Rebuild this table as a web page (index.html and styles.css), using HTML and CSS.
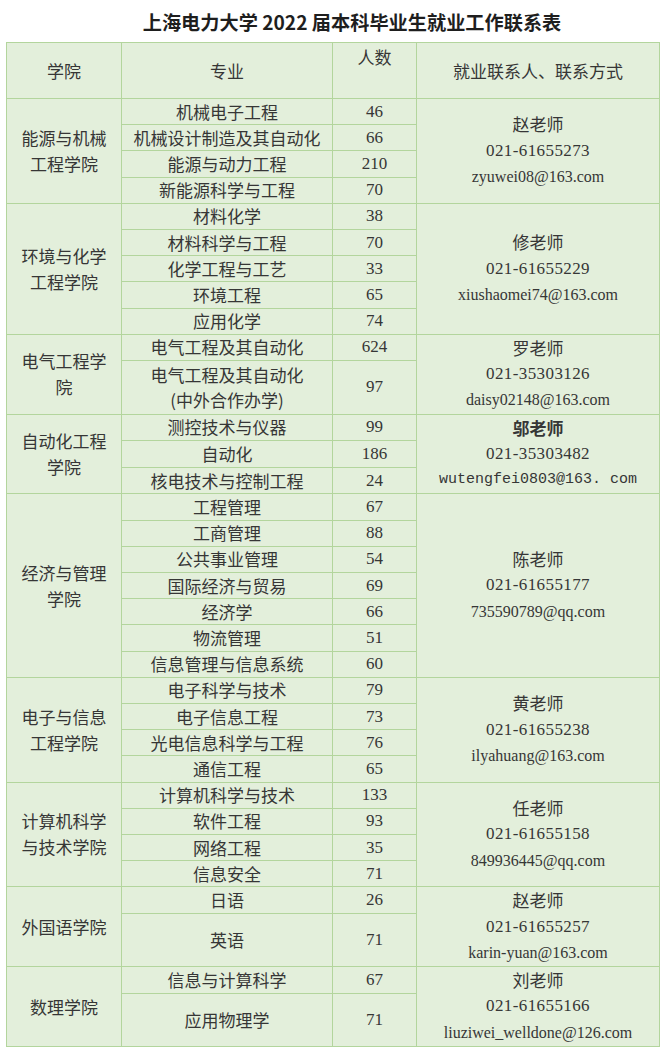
FILE: index.html
```html
<!DOCTYPE html>
<html lang="zh-CN">
<head>
<meta charset="utf-8">
<title>上海电力大学2022届本科毕业生就业工作联系表</title>
<link rel="stylesheet" href="styles.css">
</head>
<body>
<div class="page">
  <h1 class="title">上海电力大学 2022 届本科毕业生就业工作联系表</h1>
  <table class="sheet">
    <colgroup>
      <col class="c-school"><col class="c-major"><col class="c-num"><col class="c-contact">
    </colgroup>
    <thead>
      <tr class="head">
        <th>学院</th>
        <th>专业</th>
        <th class="th-num">人数</th>
        <th>就业联系人、联系方式</th>
      </tr>
    </thead>
    <tbody>
      <tr><td class="school" rowspan="4">能源与机械<br>工程学院</td><td>机械电子工程</td><td class="num">46</td>
        <td class="contact" rowspan="4"><div class="name">赵老师</div><div class="tel">021-61655273</div><div class="mail">zyuwei08@163.com</div></td></tr>
      <tr><td>机械设计制造及其自动化</td><td class="num">66</td></tr>
      <tr><td>能源与动力工程</td><td class="num">210</td></tr>
      <tr><td>新能源科学与工程</td><td class="num">70</td></tr>

      <tr><td class="school" rowspan="5">环境与化学<br>工程学院</td><td>材料化学</td><td class="num">38</td>
        <td class="contact" rowspan="5"><div class="name">修老师</div><div class="tel">021-61655229</div><div class="mail">xiushaomei74@163.com</div></td></tr>
      <tr><td>材料科学与工程</td><td class="num">70</td></tr>
      <tr><td>化学工程与工艺</td><td class="num">33</td></tr>
      <tr><td>环境工程</td><td class="num">65</td></tr>
      <tr><td>应用化学</td><td class="num">74</td></tr>

      <tr><td class="school" rowspan="2">电气工程学<br>院</td><td>电气工程及其自动化</td><td class="num">624</td>
        <td class="contact" rowspan="2"><div class="name">罗老师</div><div class="tel">021-35303126</div><div class="mail">daisy02148@163.com</div></td></tr>
      <tr class="double"><td class="two-line">电气工程及其自动化<br>(中外合作办学)</td><td class="num">97</td></tr>

      <tr><td class="school" rowspan="3">自动化工程<br>学院</td><td>测控技术与仪器</td><td class="num">99</td>
        <td class="contact" rowspan="3"><div class="name bold">邬老师</div><div class="tel">021-35303482</div><div class="mail mono">wutengfei0803@163. com</div></td></tr>
      <tr><td>自动化</td><td class="num">186</td></tr>
      <tr><td>核电技术与控制工程</td><td class="num">24</td></tr>

      <tr><td class="school" rowspan="7">经济与管理<br>学院</td><td>工程管理</td><td class="num">67</td>
        <td class="contact" rowspan="7"><div class="name">陈老师</div><div class="tel">021-61655177</div><div class="mail">735590789@qq.com</div></td></tr>
      <tr><td>工商管理</td><td class="num">88</td></tr>
      <tr><td>公共事业管理</td><td class="num">54</td></tr>
      <tr><td>国际经济与贸易</td><td class="num">69</td></tr>
      <tr><td>经济学</td><td class="num">66</td></tr>
      <tr><td>物流管理</td><td class="num">51</td></tr>
      <tr><td>信息管理与信息系统</td><td class="num">60</td></tr>

      <tr><td class="school" rowspan="4">电子与信息<br>工程学院</td><td>电子科学与技术</td><td class="num">79</td>
        <td class="contact" rowspan="4"><div class="name">黄老师</div><div class="tel">021-61655238</div><div class="mail">ilyahuang@163.com</div></td></tr>
      <tr><td>电子信息工程</td><td class="num">73</td></tr>
      <tr><td>光电信息科学与工程</td><td class="num">76</td></tr>
      <tr><td>通信工程</td><td class="num">65</td></tr>

      <tr><td class="school" rowspan="4">计算机科学<br>与技术学院</td><td>计算机科学与技术</td><td class="num">133</td>
        <td class="contact" rowspan="4"><div class="name">任老师</div><div class="tel">021-61655158</div><div class="mail">849936445@qq.com</div></td></tr>
      <tr><td>软件工程</td><td class="num">93</td></tr>
      <tr><td>网络工程</td><td class="num">35</td></tr>
      <tr><td>信息安全</td><td class="num">71</td></tr>

      <tr><td class="school" rowspan="2">外国语学院</td><td>日语</td><td class="num">26</td>
        <td class="contact" rowspan="2"><div class="name">赵老师</div><div class="tel">021-61655257</div><div class="mail">karin-yuan@163.com</div></td></tr>
      <tr class="double"><td>英语</td><td class="num">71</td></tr>

      <tr><td class="school" rowspan="2">数理学院</td><td>信息与计算科学</td><td class="num">67</td>
        <td class="contact" rowspan="2"><div class="name">刘老师</div><div class="tel">021-61655166</div><div class="mail">liuziwei_welldone@126.com</div></td></tr>
      <tr class="double"><td>应用物理学</td><td class="num">71</td></tr>
    </tbody>
  </table>
</div>
</body>
</html>
```

FILE: styles.css
```css
html, body {
  margin: 0;
  padding: 0;
  background: #ffffff;
}

.page {
  width: 666px;
  padding: 0 0 0 6px;
  box-sizing: border-box;
}

.title {
  margin: 0;
  height: 42px;
  line-height: 44px;
  padding-left: 32px;
  text-align: center;
  font-family: "Noto Sans CJK SC", sans-serif;
  font-size: 19.2px;
  font-weight: 700;
  color: #1e1e1e;
}

.sheet {
  border-collapse: collapse;
  table-layout: fixed;
  width: 653px;
  background: #e3efdb;
  font-family: "Noto Sans CJK SC", sans-serif;
  font-size: 17px;
  color: #363636;
}

.c-school { width: 115px; }
.c-major { width: 211px; }
.c-num { width: 84px; }
.c-contact { width: 243px; }

.sheet th,
.sheet td {
  border: 1px solid #b3d59d;
  padding: 0;
  text-align: center;
  vertical-align: middle;
  font-weight: 400;
  line-height: 22px;
  height: 26.2px;
  box-sizing: border-box;
}

.sheet .head th {
  height: 56px;
}

.sheet .head .th-num {
  vertical-align: top;
  padding-top: 3px;
  line-height: 22px;
}

.sheet tr.double td {
  height: 52.4px;
}

.sheet td.two-line {
  line-height: 25px;
}

.sheet td.school {
  line-height: 26px;
}

.sheet td.num {
  font-family: "Liberation Serif", serif;
  font-size: 17px;
}

.contact .name {
  line-height: 26.3px;
}

.contact .name.bold {
  font-weight: 700;
}

.contact .tel {
  font-family: "Liberation Serif", serif;
  font-size: 17px;
  letter-spacing: 0.4px;
  line-height: 26.3px;
}

.contact .mail {
  font-family: "Liberation Serif", serif;
  font-size: 16px;
  line-height: 26.3px;
}

.contact .mail.mono {
  font-family: "Liberation Mono", monospace;
  font-size: 15px;
}
```
